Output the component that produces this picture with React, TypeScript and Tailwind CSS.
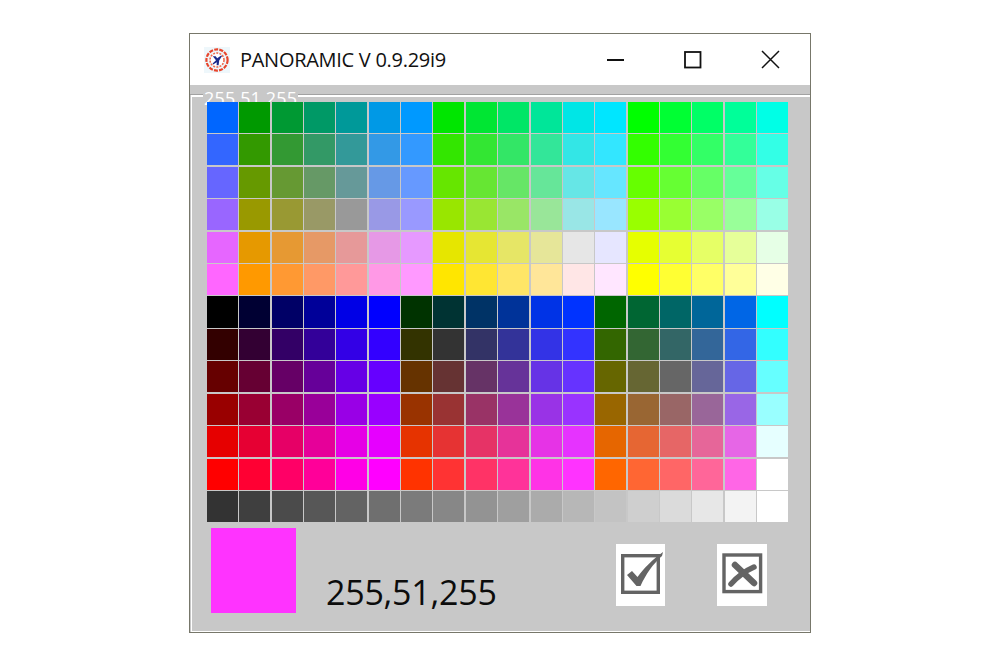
const L = [0, 51, 102, 153, 230, 255];
const L5 = [0, 51, 102, 153, 230];

function rgb(r: number, g: number, b: number) {
  return `rgb(${r},${g},${b})`;
}

function buildColors(): string[] {
  const out: string[] = [];
  for (const r of L) {
    out.push(rgb(r, 102, 255));
    for (const b of L) out.push(rgb(r, 153, b));
    for (const b of L) out.push(rgb(r, 230, b));
    for (const b of L5) out.push(rgb(r, 255, b));
  }
  for (const r of L) {
    for (const b of L) out.push(rgb(r, 0, b));
    for (const b of L) out.push(rgb(r, 51, b));
    for (const b of L5) out.push(rgb(r, 102, b));
    out.push(rgb(r, 255, 255));
  }
  for (let k = 0; k < 18; k++) {
    const v = 51 + 12 * k;
    out.push(rgb(v, v, v));
  }
  return out;
}

const colors = buildColors();

function AppIcon() {
  return (
    <svg width="26" height="26" viewBox="0 0 26 26" className="shrink-0">
      <rect width="26" height="26" fill="#eef7fb" />
      <circle cx="13" cy="13" r="10.6" fill="none" stroke="#e8452c" strokeWidth="2.2" strokeDasharray="4 1.2" />
      <circle cx="13" cy="13" r="7" fill="#fff" stroke="#ee6a4e" strokeWidth="1.6" strokeDasharray="2 1.2" />
      <path d="M8.8 9.2h2.8l1.6 2 3.6-2.4h1.4l-3 4.8-.6 4.6h-2l.2-3-3.6 2.4-.6-1.2 3.4-3.2z" fill="#1a2a8c" />
    </svg>
  );
}

export default function App() {
  return (
    <div className="flex h-[666px] w-[1000px] bg-white pl-[189px] pt-[33px]">
      <div className="flex h-[600px] w-[622px] flex-col border border-[#77776a] bg-white">
        <div className="flex h-[51px] shrink-0 items-center bg-white pl-[14px]">
          <AppIcon />
          <span className="ml-[10px] font-['Open_Sans',sans-serif] text-[20px] tracking-[-0.28px] text-[#111]">
            PANORAMIC V 0.9.29i9
          </span>
          <div className="ml-auto flex items-center">
            <svg width="18" height="18" viewBox="0 0 18 18" className="mr-[60px]">
              <path d="M1 9h17" stroke="#111" strokeWidth="2" />
            </svg>
            <svg width="18" height="18" viewBox="0 0 18 18" className="mr-[59px]">
              <rect x="1" y="1" width="15.5" height="15.5" fill="none" stroke="#111" strokeWidth="1.8" />
            </svg>
            <svg width="19" height="19" viewBox="0 0 19 19" className="mr-[30px]">
              <path d="M1 1l17 17M18 1L1 18" stroke="#111" strokeWidth="1.5" />
            </svg>
          </div>
        </div>
        <div className="flex flex-1 flex-col bg-[#c8c8c8]">
          <div className="h-[10px] shrink-0 border-b border-[#a2a2a2]" />
          <div className="relative ml-[1px] flex flex-1 flex-col border-t-2 border-b border-l border-white pl-[15px] pt-[5px]">
            <span className="absolute left-[11px] top-[-9px] font-['Open_Sans',sans-serif] text-[18px] leading-[20px] tracking-[0.15px] text-white">
              <span className="bg-[#c8c8c8] px-[1px]">255,51,255</span>
            </span>
            <div className="relative grid h-[420px] w-[581px] grid-cols-[repeat(18,1fr)] grid-rows-[repeat(13,1fr)] gap-[1.4px] bg-[#c8c8c8]">
              {colors.map((c, i) => (
                <div key={i} style={{ backgroundColor: c }} />
              ))}
            </div>
            <div className="relative flex w-[581px] flex-1 pr-[21px]">
              <div className="ml-[4px] mt-[6px] h-[85px] w-[85px] bg-[#ff33ff]" />
              <span className="ml-[30px] mt-[47px] font-['Open_Sans',sans-serif] text-[34px] font-medium leading-[46px] tracking-[-0.25px] text-[#0c0c0c]">
                255,51,255
              </span>
              <div className="ml-auto mt-[22px] flex gap-[52px]">
                <div className="h-[62px] w-[49px] bg-white">
                  <svg width="49" height="62" viewBox="0 0 49 62">
                    <rect x="6.7" y="11.7" width="35.6" height="36.6" fill="none" stroke="#646464" strokeWidth="3.4" />
                    <path d="M11 31l5-4 5.5 6C28 24 36 16 47 8l-1 4C37 20 30 30 24.5 42h-4z" fill="#646464" />
                  </svg>
                </div>
                <div className="h-[62px] w-[50px] bg-white">
                  <svg width="50" height="62" viewBox="0 0 50 62">
                    <rect x="7" y="11" width="36.6" height="36.6" fill="none" stroke="#646464" strokeWidth="3.4" />
                    <path d="M18 21l19 18" stroke="#646464" strokeWidth="6.5" strokeLinecap="round" />
                    <path d="M37 23c-9 4-16 9-23 17" fill="none" stroke="#646464" strokeWidth="5.5" strokeLinecap="round" />
                  </svg>
                </div>
              </div>
            </div>
          </div>
        </div>
      </div>
    </div>
  );
}
